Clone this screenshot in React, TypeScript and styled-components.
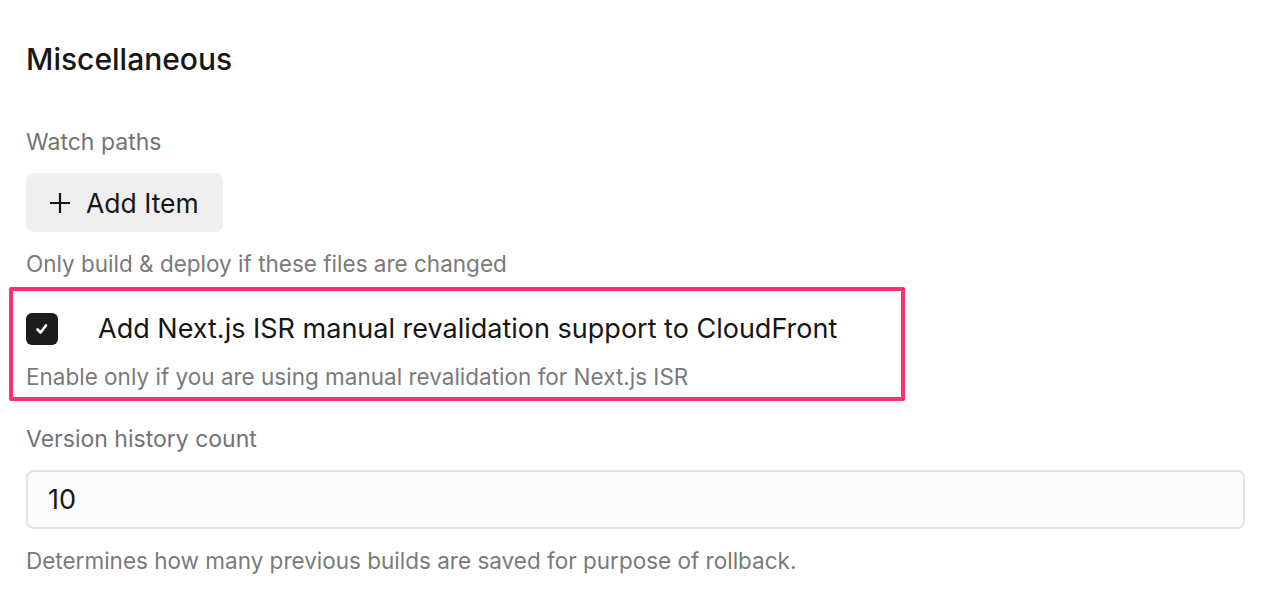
import React from 'react';
import styled, { createGlobalStyle } from 'styled-components';

const GlobalStyle = createGlobalStyle`
  html, body {
    margin: 0;
    padding: 0;
    background: #ffffff;
  }
  body {
    font-family: Inter, "Noto Sans", Arial, sans-serif;
    color: #1a1a1a;
  }
`;

const Page = styled.main`
  padding: 40px 19px 40px 26px;
`;

const Heading = styled.h2`
  margin: 0 0 49px;
  font-size: 30px;
  line-height: 38px;
  font-weight: 500;
  color: #161616;
`;

const Field = styled.div`
  display: flex;
  flex-direction: column;
`;

const Label = styled.div`
  font-size: 23px;
  line-height: 30px;
  color: #737373;
  margin-bottom: 16px;
`;

const Help = styled.div<{ $top?: number }>`
  font-size: 22.5px;
  line-height: 30px;
  color: #7a7a7a;
  margin-top: ${({ $top }) => $top ?? 17}px;
`;

const AddButton = styled.button`
  align-self: flex-start;
  display: flex;
  align-items: center;
  gap: 16px;
  height: 59px;
  padding: 0 24px;
  border: none;
  border-radius: 8px;
  background: #efefef;
  font-family: inherit;
  font-size: 26.5px;
  color: #161616;
  cursor: pointer;
  svg {
    width: 20px;
    height: 20px;
  }
`;

const Highlight = styled.section`
  margin: 8px 340px 0 -17px;
  padding: 22px 0 5px 13px;
  border: 4px solid #ff306d;
  border-radius: 2px;
`;

const CheckRow = styled.label`
  display: flex;
  align-items: center;
  gap: 40px;
  font-size: 27px;
  line-height: 32px;
  color: #161616;
`;

const Box = styled.span`
  flex: none;
  width: 32px;
  height: 32px;
  border-radius: 6px;
  background: #1c1c1c;
  display: flex;
  align-items: center;
  justify-content: center;
`;

const Input = styled.input`
  box-sizing: border-box;
  width: 100%;
  height: 59px;
  padding: 0 20px;
  border: 2px solid #e3e3e3;
  border-radius: 8px;
  background: #fcfcfc;
  font-family: inherit;
  font-size: 27px;
  color: #161616;
  outline: none;
`;

const VersionField = styled(Field)`
  margin-top: 23px;
`;

export default function App() {
  return (
    <>
      <GlobalStyle />
      <Page>
        <Heading>Miscellaneous</Heading>
        <Field>
          <Label>Watch paths</Label>
          <AddButton type="button">
            <svg viewBox="0 0 20 20" fill="none" stroke="#161616" strokeWidth="2.2">
              <path d="M10 0v20M0 10h20" />
            </svg>
            Add Item
          </AddButton>
          <Help>Only build &amp; deploy if these files are changed</Help>
        </Field>
        <Highlight>
          <CheckRow>
            <Box>
              <svg width="16" height="16" viewBox="0 0 16 16" fill="none" stroke="#fff" strokeWidth="2.6" strokeLinecap="round" strokeLinejoin="round">
                <path d="M3.5 8.5l3 3 5.5-7" />
              </svg>
            </Box>
            Add Next.js ISR manual revalidation support to CloudFront
          </CheckRow>
          <Help>Enable only if you are using manual revalidation for Next.js ISR</Help>
        </Highlight>
        <VersionField>
          <Label>Version history count</Label>
          <Input defaultValue="10" />
          <Help>Determines how many previous builds are saved for purpose of rollback.</Help>
        </VersionField>
      </Page>
    </>
  );
}
